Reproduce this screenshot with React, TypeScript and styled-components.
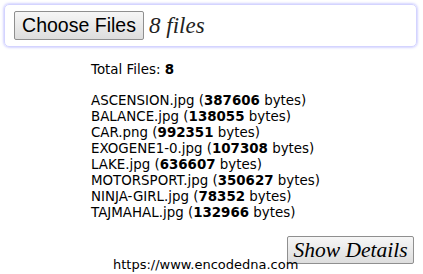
import React from "react";
import styled, { createGlobalStyle } from "styled-components";

const Global = createGlobalStyle`
  html, body { margin: 0; padding: 0; background: #fff; }
  body { width: 423px; height: 274px; overflow: hidden; position: relative; }
`;

const Page = styled.div`
  position: relative;
  width: 423px;
  height: 274px;
  padding: 4px;
  box-sizing: border-box;
`;

const InputBox = styled.div`
  display: flex;
  align-items: center;
  gap: 5px;
  width: 413px;
  height: 43px;
  box-sizing: border-box;
  padding: 0 0 0 9px;
  border-radius: 5px;
  border: 1px solid #d4d4ff;
  box-shadow: 0 0 3px #a8a8ff;
`;

const FileButton = styled.button`
  height: 29px;
  width: 130px;
  padding: 0;
  font-family: "Liberation Sans", Arial, sans-serif;
  font-size: 19.5px;
  color: #000;
  background: linear-gradient(#f6f6f6, #dddddd);
  border: 1px solid #8f8f8f;
  border-radius: 2px;
`;

const FileCount = styled.span`
  font-family: "Liberation Serif", Georgia, serif;
  font-style: italic;
  font-size: 23px;
  color: #222;
`;

const Info = styled.div`
  margin: 15px 0 0 87px;
  font-family: "DejaVu Sans", Verdana, sans-serif;
  font-size: 13.4px;
  line-height: 16px;
  color: #000;
`;

const Total = styled.p`
  margin: 0 0 15px;
`;

const FileList = styled.div`
  display: flex;
  flex-direction: column;
`;

const Footer = styled.div`
  display: flex;
  justify-content: flex-end;
  margin-top: 15px;
  padding-right: 5px;
`;

const DetailsButton = styled.button`
  width: 127px;
  height: 28px;
  padding: 0;
  white-space: nowrap;
  font-family: "Liberation Serif", Georgia, serif;
  font-style: italic;
  font-size: 21.5px;
  color: #000;
  background: linear-gradient(#f6f6f6, #dddddd);
  border: 1px solid #8f8f8f;
  border-radius: 2px;
`;

const Watermark = styled.div`
  position: absolute;
  left: 113px;
  top: 257px;
  font-family: "DejaVu Sans", Verdana, sans-serif;
  font-size: 13px;
  line-height: 16px;
  color: #000;
  pointer-events: none;
`;

const files: [string, number][] = [
  ["ASCENSION.jpg", 387606],
  ["BALANCE.jpg", 138055],
  ["CAR.png", 992351],
  ["EXOGENE1-0.jpg", 107308],
  ["LAKE.jpg", 636607],
  ["MOTORSPORT.jpg", 350627],
  ["NINJA-GIRL.jpg", 78352],
  ["TAJMAHAL.jpg", 132966],
];

export default function App() {
  return (
    <Page>
      <Global />
      <InputBox>
        <FileButton>Choose Files</FileButton>
        <FileCount>8 files</FileCount>
      </InputBox>
      <Info>
        <Total>
          Total Files: <b>8</b>
        </Total>
        <FileList>
          {files.map(([name, size]) => (
            <span key={name}>
              {name} (<b>{size}</b> bytes)
            </span>
          ))}
        </FileList>
      </Info>
      <Watermark>https://www.encodedna.com</Watermark>
      <Footer>
        <DetailsButton>Show Details</DetailsButton>
      </Footer>
    </Page>
  );
}
